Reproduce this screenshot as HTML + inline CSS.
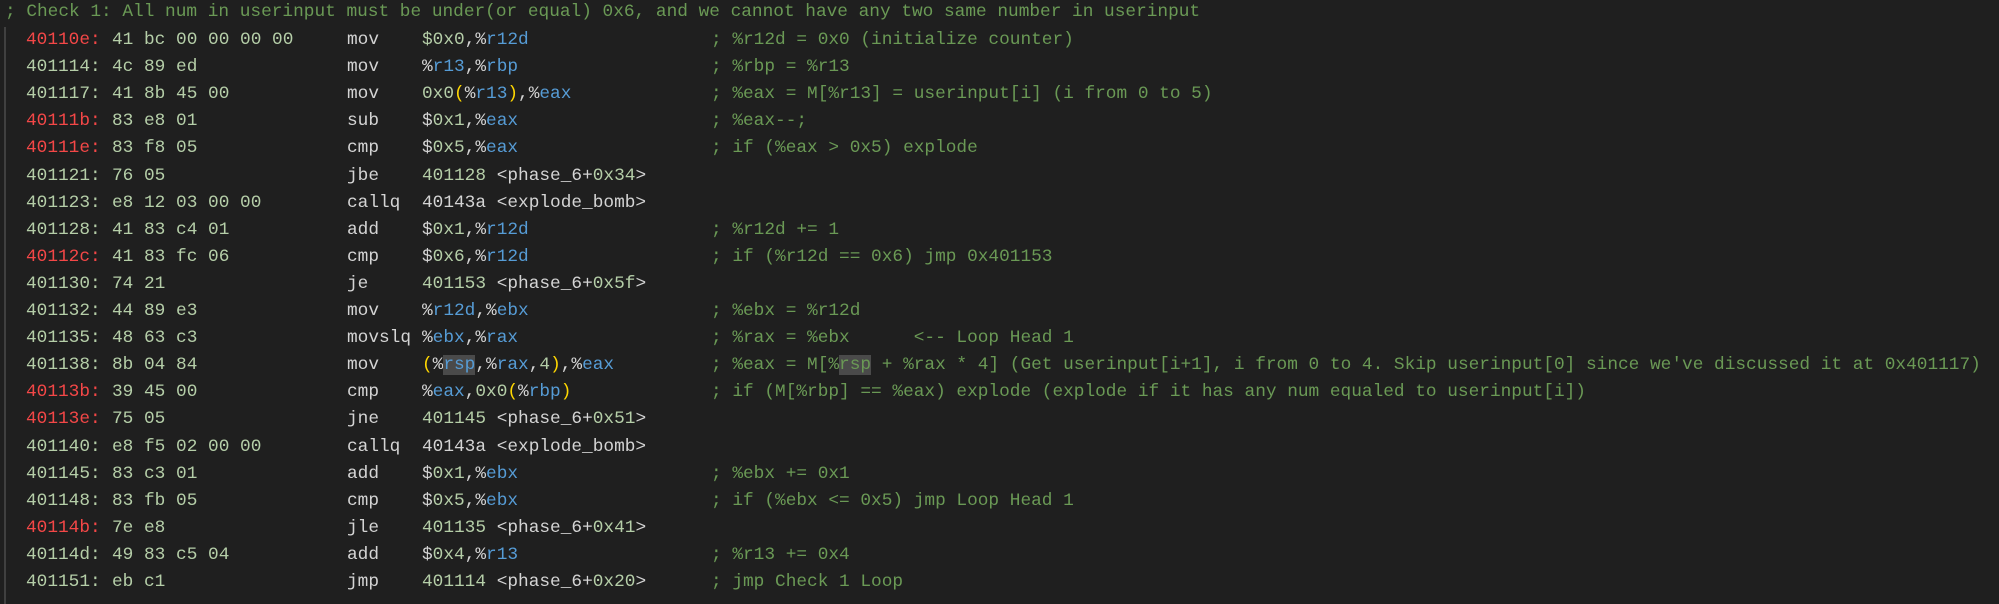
<!DOCTYPE html>
<html><head><meta charset="utf-8"><style>
html,body{margin:0;padding:0;background:#1f1f1f;}
body{width:1999px;height:604px;position:relative;overflow:hidden;font-family:"Liberation Mono",monospace;font-size:17.8px;color:#d4d4d4;}
.r{position:absolute;left:0;height:27px;line-height:27px;white-space:pre;width:1999px;}
.r span.c{position:absolute;top:0;}
.a{left:26px}.b{left:112px;color:#b5cea8}.m{left:347px}.o{left:422px}.k{left:711px;color:#6a9955}
.red{color:#f44747}.ad{color:#b5cea8}
.n{color:#b5cea8}.g{color:#569cd6}.y{color:#ffd700}
.hl{background:#4a4a4a}
.guide{position:absolute;left:4px;top:27px;width:2px;height:577px;background:#404040;}
</style></head><body>
<div class="guide"></div>
<div class="r" style="top:-1px;left:5px;color:#6a9955">; Check 1: All num in userinput must be under(or equal) 0x6, and we cannot have any two same number in userinput</div>

<div class="r" style="top:27px"><span class="c a red">40110e:</span><span class="c b">41 bc 00 00 00 00</span><span class="c m">mov</span><span class="c o"><span class="n">$0x0</span>,%<span class="g">r12d</span></span><span class="c k">; %r12d = 0x0 (initialize counter)</span></div>
<div class="r" style="top:54px"><span class="c a ad">401114:</span><span class="c b">4c 89 ed</span><span class="c m">mov</span><span class="c o">%<span class="g">r13</span>,%<span class="g">rbp</span></span><span class="c k">; %rbp = %r13</span></div>
<div class="r" style="top:81px"><span class="c a ad">401117:</span><span class="c b">41 8b 45 00</span><span class="c m">mov</span><span class="c o"><span class="n">0x0</span><span class="y">(</span>%<span class="g">r13</span><span class="y">)</span>,%<span class="g">eax</span></span><span class="c k">; %eax = M[%r13] = userinput[i] (i from 0 to 5)</span></div>
<div class="r" style="top:108px"><span class="c a red">40111b:</span><span class="c b">83 e8 01</span><span class="c m">sub</span><span class="c o">$<span class="n">0x1</span>,%<span class="g">eax</span></span><span class="c k">; %eax--;</span></div>
<div class="r" style="top:135px"><span class="c a red">40111e:</span><span class="c b">83 f8 05</span><span class="c m">cmp</span><span class="c o">$<span class="n">0x5</span>,%<span class="g">eax</span></span><span class="c k">; if (%eax &gt; 0x5) explode</span></div>
<div class="r" style="top:163px"><span class="c a ad">401121:</span><span class="c b">76 05</span><span class="c m">jbe</span><span class="c o"><span class="n">401128</span> &lt;phase_6+<span class="n">0x34</span>&gt;</span></div>
<div class="r" style="top:190px"><span class="c a ad">401123:</span><span class="c b">e8 12 03 00 00</span><span class="c m">callq</span><span class="c o">40143a &lt;explode_bomb&gt;</span></div>
<div class="r" style="top:217px"><span class="c a ad">401128:</span><span class="c b">41 83 c4 01</span><span class="c m">add</span><span class="c o">$<span class="n">0x1</span>,%<span class="g">r12d</span></span><span class="c k">; %r12d += 1</span></div>
<div class="r" style="top:244px"><span class="c a red">40112c:</span><span class="c b">41 83 fc 06</span><span class="c m">cmp</span><span class="c o">$<span class="n">0x6</span>,%<span class="g">r12d</span></span><span class="c k">; if (%r12d == 0x6) jmp 0x401153</span></div>
<div class="r" style="top:271px"><span class="c a ad">401130:</span><span class="c b">74 21</span><span class="c m">je</span><span class="c o"><span class="n">401153</span> &lt;phase_6+<span class="n">0x5f</span>&gt;</span></div>
<div class="r" style="top:298px"><span class="c a ad">401132:</span><span class="c b">44 89 e3</span><span class="c m">mov</span><span class="c o">%<span class="g">r12d</span>,%<span class="g">ebx</span></span><span class="c k">; %ebx = %r12d</span></div>
<div class="r" style="top:325px"><span class="c a ad">401135:</span><span class="c b">48 63 c3</span><span class="c m">movslq</span><span class="c o">%<span class="g">ebx</span>,%<span class="g">rax</span></span><span class="c k">; %rax = %ebx      &lt;-- Loop Head 1</span></div>
<div class="r" style="top:352px"><span class="c a ad">401138:</span><span class="c b">8b 04 84</span><span class="c m">mov</span><span class="c o"><span class="y">(</span>%<span class="g hl">rsp</span>,%<span class="g">rax</span>,<span class="n">4</span><span class="y">)</span>,%<span class="g">eax</span></span><span class="c k">; %eax = M[%<span class="hl">rsp</span> + %rax * 4] (Get userinput[i+1], i from 0 to 4. Skip userinput[0] since we've discussed it at 0x401117)</span></div>
<div class="r" style="top:379px"><span class="c a red">40113b:</span><span class="c b">39 45 00</span><span class="c m">cmp</span><span class="c o">%<span class="g">eax</span>,<span class="n">0x0</span><span class="y">(</span>%<span class="g">rbp</span><span class="y">)</span></span><span class="c k">; if (M[%rbp] == %eax) explode (explode if it has any num equaled to userinput[i])</span></div>
<div class="r" style="top:406px"><span class="c a red">40113e:</span><span class="c b">75 05</span><span class="c m">jne</span><span class="c o"><span class="n">401145</span> &lt;phase_6+<span class="n">0x51</span>&gt;</span></div>
<div class="r" style="top:434px"><span class="c a ad">401140:</span><span class="c b">e8 f5 02 00 00</span><span class="c m">callq</span><span class="c o">40143a &lt;explode_bomb&gt;</span></div>
<div class="r" style="top:461px"><span class="c a ad">401145:</span><span class="c b">83 c3 01</span><span class="c m">add</span><span class="c o">$<span class="n">0x1</span>,%<span class="g">ebx</span></span><span class="c k">; %ebx += 0x1</span></div>
<div class="r" style="top:488px"><span class="c a ad">401148:</span><span class="c b">83 fb 05</span><span class="c m">cmp</span><span class="c o">$<span class="n">0x5</span>,%<span class="g">ebx</span></span><span class="c k">; if (%ebx &lt;= 0x5) jmp Loop Head 1</span></div>
<div class="r" style="top:515px"><span class="c a red">40114b:</span><span class="c b">7e e8</span><span class="c m">jle</span><span class="c o"><span class="n">401135</span> &lt;phase_6+<span class="n">0x41</span>&gt;</span></div>
<div class="r" style="top:542px"><span class="c a ad">40114d:</span><span class="c b">49 83 c5 04</span><span class="c m">add</span><span class="c o">$<span class="n">0x4</span>,%<span class="g">r13</span></span><span class="c k">; %r13 += 0x4</span></div>
<div class="r" style="top:569px"><span class="c a ad">401151:</span><span class="c b">eb c1</span><span class="c m">jmp</span><span class="c o"><span class="n">401114</span> &lt;phase_6+<span class="n">0x20</span>&gt;</span><span class="c k">; jmp Check 1 Loop</span></div>
</body></html>
